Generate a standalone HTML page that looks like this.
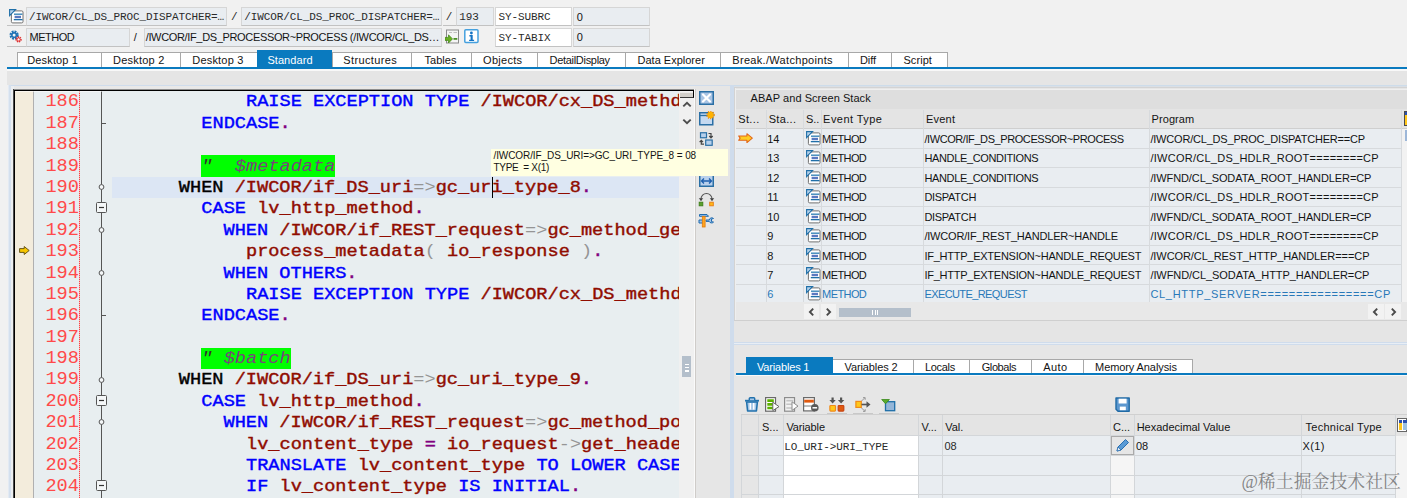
<!DOCTYPE html>
<html><head><meta charset="utf-8"><title>ABAP Debugger</title>
<style>
html,body{margin:0;padding:0}
body{width:1407px;height:498px;position:relative;overflow:hidden;background:#f1f1f1;font-family:"Liberation Sans",sans-serif;font-size:11px}
div,span,svg{position:absolute;white-space:nowrap}
.cl{font-family:"Liberation Mono",monospace;font-weight:normal;-webkit-text-stroke:0.45px;font-size:18.62px;line-height:21.39px;height:21.39px;white-space:pre;transform:scaleY(0.86);transform-origin:0 15.65px;margin-top:0.4px}
.cl span{position:static;white-space:pre}
.ln{font-family:"Liberation Mono",monospace;font-size:18.62px;line-height:21.39px;color:#ff4a4a;white-space:pre;transform:scaleY(0.95);transform-origin:0 15.65px;margin-top:0.4px}
</style></head>
<body>
<div style="left:7px;top:25px;width:20px;height:1px;background:#c2c2c2;"></div>
<div style="left:7px;top:46px;width:20px;height:1px;background:#c2c2c2;"></div>
<div style="left:443px;top:25px;width:14px;height:1px;background:#c2c2c2;"></div>
<div style="left:26px;top:7px;width:201px;height:19px;background:#e9edf1;border:1px solid #d6d6d6;border-bottom-color:#c2c2c2;box-sizing:border-box;"></div>
<div style="left:241px;top:7px;width:201px;height:19px;background:#e9edf1;border:1px solid #d6d6d6;border-bottom-color:#c2c2c2;box-sizing:border-box;"></div>
<div style="left:456px;top:7px;width:38px;height:19px;background:#e9edf1;border:1px solid #d6d6d6;border-bottom-color:#c2c2c2;box-sizing:border-box;"></div>
<div style="left:495px;top:7px;width:77px;height:19px;background:#fff;border:1px solid #d6d6d6;border-bottom-color:#c2c2c2;box-sizing:border-box;"></div>
<div style="left:573px;top:7px;width:77px;height:19px;background:#e9edf1;border:1px solid #d6d6d6;border-bottom-color:#c2c2c2;box-sizing:border-box;"></div>
<div style="left:26px;top:28px;width:104px;height:19px;background:#e9edf1;border:1px solid #d6d6d6;border-bottom-color:#c2c2c2;box-sizing:border-box;"></div>
<div style="left:144px;top:28px;width:298px;height:19px;background:#e9edf1;border:1px solid #d6d6d6;border-bottom-color:#c2c2c2;box-sizing:border-box;"></div>
<div style="left:495px;top:28px;width:77px;height:19px;background:#fff;border:1px solid #d6d6d6;border-bottom-color:#c2c2c2;box-sizing:border-box;"></div>
<div style="left:573px;top:28px;width:77px;height:19px;background:#e9edf1;border:1px solid #d6d6d6;border-bottom-color:#c2c2c2;box-sizing:border-box;"></div>
<span style="left:29.10px;top:11.57px;font-size:11px;line-height:11px;color:#2a2a2a;font-family:'Liberation Mono',monospace;letter-spacing:-0.101px;">/IWCOR/CL_DS_PROC_DISPATCHER=…</span>
<span style="left:231.00px;top:11.57px;font-size:11px;line-height:11px;color:#2a2a2a;font-family:'Liberation Mono',monospace;">/</span>
<span style="left:244.20px;top:11.57px;font-size:11px;line-height:11px;color:#2a2a2a;font-family:'Liberation Mono',monospace;letter-spacing:-0.101px;">/IWCOR/CL_DS_PROC_DISPATCHER=…</span>
<span style="left:445.70px;top:11.57px;font-size:11px;line-height:11px;color:#2a2a2a;font-family:'Liberation Mono',monospace;">/</span>
<span style="left:459.30px;top:11.57px;font-size:11px;line-height:11px;color:#2a2a2a;font-family:'Liberation Mono',monospace;letter-spacing:-0.101px;">193</span>
<span style="left:498.40px;top:11.57px;font-size:11px;line-height:11px;color:#2a2a2a;font-family:'Liberation Mono',monospace;letter-spacing:-0.101px;">SY-SUBRC</span>
<span style="left:576.70px;top:11.69px;font-size:11px;line-height:11px;color:#141414;">0</span>
<span style="left:29.60px;top:31.69px;font-size:11px;line-height:11px;color:#141414;letter-spacing:-0.494px;">METHOD</span>
<span style="left:133.80px;top:31.69px;font-size:11px;line-height:11px;color:#141414;">/</span>
<span style="left:145.70px;top:31.69px;font-size:11px;line-height:11px;color:#141414;letter-spacing:-0.344px;">/IWCOR/IF_DS_PROCESSOR~PROCESS (/IWCOR/CL_DS…</span>
<span style="left:498.40px;top:32.57px;font-size:11px;line-height:11px;color:#2a2a2a;font-family:'Liberation Mono',monospace;letter-spacing:-0.101px;">SY-TABIX</span>
<span style="left:576.70px;top:31.69px;font-size:11px;line-height:11px;color:#141414;">0</span>
<svg style="left:8.5px;top:8.7px" width="15" height="15" viewBox="0 0 15 15"><rect x="2.4" y="1.9" width="11.6" height="12" rx="1.3" fill="#fff" stroke="#707070"/><path d="M0.6 0.6H6.6L0.6 6.6Z" fill="#b4d0ea" stroke="#1f6fa8" stroke-width="1.1"/><rect x="5" y="4.5" width="8.4" height="1.4" fill="#3a86b8"/><rect x="5.6" y="6.8" width="6.4" height="2.4" fill="#5a78c0"/><rect x="4.8" y="10" width="8.7" height="1.3" fill="#1f6fa8"/></svg>
<svg style="left:8px;top:29px" width="16" height="16" viewBox="0 0 16 16"><circle cx="6.1" cy="6.1" r="3.2" fill="none" stroke="#1f72b5" stroke-width="2.8" stroke-dasharray="1.7 0.81"/><circle cx="6.1" cy="6.1" r="2.3" fill="none" stroke="#1f72b5" stroke-width="1.4"/><circle cx="10.6" cy="10.4" r="2.2" fill="none" stroke="#e03030" stroke-width="1.9" stroke-dasharray="1.1 0.63"/><circle cx="10.6" cy="10.4" r="1.5" fill="#fff" stroke="#e03030" stroke-width="0.9"/></svg>
<svg style="left:445px;top:29px" width="15" height="15" viewBox="0 0 15 15"><rect x="1.5" y="1" width="12" height="13" fill="#f4f4f4" stroke="#8a8a8a"/><path d="M4 3.500h3M8.500 3.500h3.500" stroke="#c0c0c0"/><path d="M0 8.400h3.500v-2.600l4 4.100-4 4.100v-2.600h-3.500z" fill="#6ab023" stroke="#3d8312" stroke-width="0.700"/><path d="M8.500 9.900h3.800" stroke="#3f8a1c" stroke-width="1.700"/></svg>
<svg style="left:464px;top:29px" width="15" height="15" viewBox="0 0 15 15"><rect x="0.800" y="0.800" width="13.200" height="12.600" rx="1" fill="#fff" stroke="#45a0de" stroke-width="1.500"/><circle cx="7.400" cy="4" r="1.400" fill="#1473c4"/><path d="M5.400 6.100h3.300v4.600h1.400v1.300h-5v-1.300h1.500v-3.300h-1.200z" fill="#1473c4"/></svg>
<div style="left:17px;top:52px;width:931px;height:15px;background:#fff;border-top:1px solid #a8a8a8;box-sizing:border-box;"></div>
<div style="left:17px;top:53px;width:1px;height:14px;background:#a8a8a8;"></div>
<div style="left:101px;top:53px;width:1px;height:14px;background:#a8a8a8;"></div>
<div style="left:180px;top:53px;width:1px;height:14px;background:#a8a8a8;"></div>
<div style="left:332px;top:53px;width:1px;height:14px;background:#a8a8a8;"></div>
<div style="left:411px;top:53px;width:1px;height:14px;background:#a8a8a8;"></div>
<div style="left:471px;top:53px;width:1px;height:14px;background:#a8a8a8;"></div>
<div style="left:537px;top:53px;width:1px;height:14px;background:#a8a8a8;"></div>
<div style="left:625px;top:53px;width:1px;height:14px;background:#a8a8a8;"></div>
<div style="left:720px;top:53px;width:1px;height:14px;background:#a8a8a8;"></div>
<div style="left:848px;top:53px;width:1px;height:14px;background:#a8a8a8;"></div>
<div style="left:891px;top:53px;width:1px;height:14px;background:#a8a8a8;"></div>
<div style="left:947px;top:53px;width:1px;height:14px;background:#a8a8a8;"></div>
<div style="left:7px;top:67px;width:1400px;height:2px;background:#0a7abf;"></div>
<div style="left:7px;top:69px;width:1400px;height:2px;background:#f8f8f8;"></div>
<div style="left:257px;top:50px;width:75px;height:18px;background:#0a7abf;"></div>
<span style="left:27.30px;top:54.69px;font-size:11px;line-height:11px;color:#141414;letter-spacing:0.130px;">Desktop 1</span>
<span style="left:113.00px;top:54.69px;font-size:11px;line-height:11px;color:#141414;letter-spacing:0.219px;">Desktop 2</span>
<span style="left:192.30px;top:54.69px;font-size:11px;line-height:11px;color:#141414;letter-spacing:0.186px;">Desktop 3</span>
<span style="left:267.40px;top:54.69px;font-size:11px;line-height:11px;color:#fff;letter-spacing:0.069px;">Standard</span>
<span style="left:343.30px;top:54.69px;font-size:11px;line-height:11px;color:#141414;letter-spacing:0.357px;">Structures</span>
<span style="left:424.60px;top:54.69px;font-size:11px;line-height:11px;color:#141414;letter-spacing:0.000px;">Tables</span>
<span style="left:483.10px;top:54.69px;font-size:11px;line-height:11px;color:#141414;letter-spacing:0.287px;">Objects</span>
<span style="left:549.60px;top:54.69px;font-size:11px;line-height:11px;color:#141414;letter-spacing:-0.307px;">DetailDisplay</span>
<span style="left:637.50px;top:54.69px;font-size:11px;line-height:11px;color:#141414;letter-spacing:0.004px;">Data Explorer</span>
<span style="left:732.30px;top:54.69px;font-size:11px;line-height:11px;color:#141414;letter-spacing:0.313px;">Break./Watchpoints</span>
<span style="left:859.90px;top:54.69px;font-size:11px;line-height:11px;color:#141414;letter-spacing:-0.050px;">Diff</span>
<span style="left:903.40px;top:54.69px;font-size:11px;line-height:11px;color:#141414;letter-spacing:0.080px;">Script</span>
<div style="left:7px;top:71px;width:1400px;height:14px;background:#e5e5e5;"></div>
<div style="left:8px;top:85px;width:726px;height:413px;background:#e6e6e6;"></div>
<div style="left:8px;top:85px;width:726px;height:1px;background:#cfdcec;"></div>
<div style="left:8px;top:85px;width:1px;height:413px;background:#e3eaf3;"></div>
<div style="left:9px;top:85px;width:2px;height:413px;background:#d4e0ee;"></div>
<div style="left:730px;top:85px;width:4px;height:413px;background:#cfdcec;"></div>
<div style="left:11px;top:86px;width:684px;height:4px;background:#e8e8e8;"></div>
<div style="left:11px;top:86px;width:3px;height:412px;background:#eceef0;"></div>
<div style="left:13px;top:89px;width:681px;height:1px;background:#8e8e8e;"></div>
<div style="left:13px;top:89px;width:1px;height:409px;background:#4a4a4a;"></div>
<div style="left:14px;top:90px;width:680px;height:1px;background:#000;"></div>
<div style="left:14px;top:90px;width:1px;height:408px;background:#000;"></div>
<div style="left:15px;top:91px;width:18px;height:407px;background:#f3ecdc;"></div>
<div style="left:33px;top:91px;width:69px;height:407px;background:#e8eef0;"></div>
<div style="left:33px;top:91px;width:1px;height:407px;background:#b0b0b0;"></div>
<div style="left:79px;top:91px;width:1px;height:407px;background:repeating-linear-gradient(#ff4040 0 1px,rgba(255,80,80,0.3) 1px 2px);"></div>
<div style="left:101px;top:91px;width:1px;height:407px;background:#555;"></div>
<div style="left:15px;top:91px;width:664px;height:1px;background:rgba(255,255,255,0.55);"></div>
<div style="left:102px;top:91px;width:577px;height:407px;background:#e8eef0;overflow:hidden">
<div style="left:10px;top:85.56px;width:567px;height:21.39px;background:#dce6f4"></div>
<div class="cl" style="left:144.00px;top:0.00px"><span style="color:#0000ff;">RAISE EXCEPTION TYPE </span><span style="color:#900c00;">/IWCOR/cx_DS_methd</span></div>
<div class="cl" style="left:99.30px;top:21.39px"><span style="color:#0000ff;">ENDCASE</span><span style="color:#800080;">.</span></div>
<div style="left:99.3px;top:64.17px;width:134.0px;height:21.39px;background:#00ff00"></div>
<div class="cl" style="left:99.30px;top:64.17px"><span style="color:#303030;-webkit-text-stroke:0;font-style:italic;">&quot;  </span><span style="color:#77457a;-webkit-text-stroke:0;font-style:italic;">$metadata</span></div>
<div class="cl" style="left:76.80px;top:85.56px"><span style="color:#000;">WHEN </span><span style="color:#900c00;">/IWCOR/if_DS_uri</span><span style="color:#959595;-webkit-text-stroke:0;">=&gt;</span><span style="color:#900c00;">gc_uri_type_8</span><span style="color:#800080;">.</span></div>
<div class="cl" style="left:99.30px;top:106.95px"><span style="color:#0000ff;">CASE </span><span style="color:#900c00;">lv_http_method</span><span style="color:#800080;">.</span></div>
<div class="cl" style="left:121.50px;top:128.34px"><span style="color:#0000ff;">WHEN </span><span style="color:#900c00;">/IWCOR/if_REST_request</span><span style="color:#959595;-webkit-text-stroke:0;">=&gt;</span><span style="color:#900c00;">gc_method_ge</span></div>
<div class="cl" style="left:144.00px;top:149.73px"><span style="color:#900c00;">process_metadata</span><span style="color:#959595;-webkit-text-stroke:0;">( </span><span style="color:#900c00;">io_response</span><span style="color:#959595;-webkit-text-stroke:0;"> )</span><span style="color:#800080;">.</span></div>
<div class="cl" style="left:121.50px;top:171.12px"><span style="color:#0000ff;">WHEN OTHERS</span><span style="color:#800080;">.</span></div>
<div class="cl" style="left:144.00px;top:192.51px"><span style="color:#0000ff;">RAISE EXCEPTION TYPE </span><span style="color:#900c00;">/IWCOR/cx_DS_methd</span></div>
<div class="cl" style="left:99.30px;top:213.90px"><span style="color:#0000ff;">ENDCASE</span><span style="color:#800080;">.</span></div>
<div style="left:99.3px;top:256.68px;width:89.4px;height:21.39px;background:#00ff00"></div>
<div class="cl" style="left:99.30px;top:256.68px"><span style="color:#303030;-webkit-text-stroke:0;font-style:italic;">&quot; </span><span style="color:#77457a;-webkit-text-stroke:0;font-style:italic;">$batch</span></div>
<div class="cl" style="left:76.80px;top:278.07px"><span style="color:#000;">WHEN </span><span style="color:#900c00;">/IWCOR/if_DS_uri</span><span style="color:#959595;-webkit-text-stroke:0;">=&gt;</span><span style="color:#900c00;">gc_uri_type_9</span><span style="color:#800080;">.</span></div>
<div class="cl" style="left:99.30px;top:299.46px"><span style="color:#0000ff;">CASE </span><span style="color:#900c00;">lv_http_method</span><span style="color:#800080;">.</span></div>
<div class="cl" style="left:121.50px;top:320.85px"><span style="color:#0000ff;">WHEN </span><span style="color:#900c00;">/IWCOR/if_REST_request</span><span style="color:#959595;-webkit-text-stroke:0;">=&gt;</span><span style="color:#900c00;">gc_method_po</span></div>
<div class="cl" style="left:144.00px;top:342.24px"><span style="color:#900c00;">lv_content_type </span><span style="color:#800080;">= </span><span style="color:#900c00;">io_request</span><span style="color:#959595;-webkit-text-stroke:0;">-&gt;</span><span style="color:#900c00;">get_heade</span></div>
<div class="cl" style="left:144.00px;top:363.63px"><span style="color:#0000ff;">TRANSLATE </span><span style="color:#900c00;">lv_content_type </span><span style="color:#0000ff;">TO LOWER CASE</span></div>
<div class="cl" style="left:144.00px;top:385.02px"><span style="color:#0000ff;">IF </span><span style="color:#900c00;">lv_content_type </span><span style="color:#0000ff;">IS INITIAL</span><span style="color:#800080;">.</span></div>
</div>
<div style="left:492px;top:177px;width:1px;height:21px;background:#000;"></div>
<div class="ln" style="left:45.4px;top:91.00px">186</div>
<div class="ln" style="left:45.4px;top:112.39px">187</div>
<div class="ln" style="left:45.4px;top:133.78px">188</div>
<div class="ln" style="left:45.4px;top:155.17px">189</div>
<div class="ln" style="left:45.4px;top:176.56px">190</div>
<div class="ln" style="left:45.4px;top:197.95px">191</div>
<div class="ln" style="left:45.4px;top:219.34px">192</div>
<div class="ln" style="left:45.4px;top:240.73px">193</div>
<div class="ln" style="left:45.4px;top:262.12px">194</div>
<div class="ln" style="left:45.4px;top:283.51px">195</div>
<div class="ln" style="left:45.4px;top:304.90px">196</div>
<div class="ln" style="left:45.4px;top:326.29px">197</div>
<div class="ln" style="left:45.4px;top:347.68px">198</div>
<div class="ln" style="left:45.4px;top:369.07px">199</div>
<div class="ln" style="left:45.4px;top:390.46px">200</div>
<div class="ln" style="left:45.4px;top:411.85px">201</div>
<div class="ln" style="left:45.4px;top:433.24px">202</div>
<div class="ln" style="left:45.4px;top:454.63px">203</div>
<div class="ln" style="left:45.4px;top:476.02px">204</div>
<div style="left:102px;top:123px;width:4px;height:1px;background:#555;"></div>
<div style="left:102px;top:315px;width:4px;height:1px;background:#555;"></div>
<svg style="left:97px;top:182.0px" width="10" height="10" viewBox="0 0 10 10"><circle cx="4.5" cy="5" r="2.4" fill="#f4f7f8" stroke="#555" stroke-width="1"/></svg>
<svg style="left:97px;top:224.7px" width="10" height="10" viewBox="0 0 10 10"><circle cx="4.5" cy="5" r="2.4" fill="#f4f7f8" stroke="#555" stroke-width="1"/></svg>
<svg style="left:97px;top:267.5px" width="10" height="10" viewBox="0 0 10 10"><circle cx="4.5" cy="5" r="2.4" fill="#f4f7f8" stroke="#555" stroke-width="1"/></svg>
<svg style="left:97px;top:374.5px" width="10" height="10" viewBox="0 0 10 10"><circle cx="4.5" cy="5" r="2.4" fill="#f4f7f8" stroke="#555" stroke-width="1"/></svg>
<svg style="left:97px;top:417.2px" width="10" height="10" viewBox="0 0 10 10"><circle cx="4.5" cy="5" r="2.4" fill="#f4f7f8" stroke="#555" stroke-width="1"/></svg>
<svg style="left:96px;top:202.1px" width="11" height="11" viewBox="0 0 11 11"><rect x="0.5" y="0.5" width="10" height="10" rx="1" fill="#f4f7f8" stroke="#555"/><path d="M3 5.5h5" stroke="#333" stroke-width="1.2"/></svg>
<svg style="left:96px;top:394.7px" width="11" height="11" viewBox="0 0 11 11"><rect x="0.5" y="0.5" width="10" height="10" rx="1" fill="#f4f7f8" stroke="#555"/><path d="M3 5.5h5" stroke="#333" stroke-width="1.2"/></svg>
<svg style="left:96px;top:480.2px" width="11" height="11" viewBox="0 0 11 11"><rect x="0.5" y="0.5" width="10" height="10" rx="1" fill="#f4f7f8" stroke="#555"/><path d="M3 5.5h5" stroke="#333" stroke-width="1.2"/></svg>
<svg style="left:19px;top:245.7px" width="11" height="9" viewBox="0 0 11 9"><path d="M0.6 2.6h4.6v-2.100l5 4-5 4v-2.100h-4.600z" fill="#f7c600" stroke="#5a4a10" stroke-width="0.9" stroke-linejoin="round"/></svg>
<div style="left:679px;top:91px;width:15px;height:407px;background:#f0f0f0;"></div>
<div style="left:694px;top:89px;width:1px;height:409px;background:#fafafa;"></div>
<div style="left:695px;top:89px;width:1px;height:409px;background:#cfccc9;"></div>
<div style="left:680px;top:91px;width:13px;height:6px;background:linear-gradient(#f4f4f4 0 20%,#d2cfca 40% 100%);border-right:1px solid #000;border-bottom:1px solid #3a3a3a;"></div>
<svg style="left:682px;top:101px" width="10" height="7" viewBox="0 0 10 7"><path d="M1.300 5.400L5 1.800 8.700 5.400" fill="none" stroke="#4d4d4d" stroke-width="1.900"/></svg>
<svg style="left:682px;top:118px" width="10" height="7" viewBox="0 0 10 7"><path d="M1.300 1.600L5 5.200 8.700 1.600" fill="none" stroke="#4d4d4d" stroke-width="1.900"/></svg>
<div style="left:682px;top:356px;width:9px;height:21px;background:#b4bfcb;"></div>
<div style="left:685px;top:364.0px;width:4px;height:1.2px;background:#fff;"></div>
<div style="left:685px;top:367.2px;width:4px;height:1.2px;background:#fff;"></div>
<div style="left:685px;top:370.4px;width:4px;height:1.2px;background:#fff;"></div>
<svg style="left:699px;top:91px" width="15" height="14" viewBox="0 0 15 14"><rect x="0.750" y="0.750" width="13.500" height="12.500" fill="#a9c4e4" stroke="#2a6fa5" stroke-width="1.500"/><path d="M4 3.500l7 7M11 3.500l-7 7" stroke="#fff" stroke-width="2.200" stroke-linecap="round"/></svg>
<svg style="left:699px;top:111px" width="16" height="15" viewBox="0 0 16 15"><rect x="0.750" y="1.750" width="13" height="12" fill="#c5d9f0" stroke="#2a6fa5" stroke-width="1.500"/><path d="M1 4.500h8" stroke="#2a6fa5" stroke-width="1.300"/><circle cx="11.500" cy="4" r="3.200" fill="#ffb200"/><circle cx="11.500" cy="4" r="3.700" fill="none" stroke="#f08a00" stroke-width="1.200" stroke-dasharray="1.200 1.200"/></svg>
<svg style="left:699px;top:132px" width="15" height="14" viewBox="0 0 15 14"><rect x="1.500" y="0.750" width="6" height="5" fill="#b7d0ec" stroke="#2a6fa5" stroke-width="1.200"/><rect x="6.700" y="8" width="6.500" height="5.300" fill="#b7d0ec" stroke="#2a6fa5" stroke-width="1.200"/><path d="M9.500 1.500h2.500v3.500M10.300 4l1.700 1.800 1.700-1.800" fill="none" stroke="#444" stroke-width="1.200"/><path d="M5 12.200h-2.700v-3.500M0.600 10.200l1.700-1.800 1.700 1.800" fill="none" stroke="#444" stroke-width="1.200"/></svg>
<svg style="left:699px;top:173px" width="15" height="14" viewBox="0 0 15 14"><rect x="0.750" y="0.750" width="13.500" height="12.500" fill="#b9d0ec" stroke="#2a6fa5" stroke-width="1.500"/><path d="M2.500 8h10M5 5.500l-2.500 2.500 2.500 2.500M10 5.500l2.500 2.500-2.500 2.500" fill="none" stroke="#1d5fae" stroke-width="1.300"/></svg>
<svg style="left:698px;top:192px" width="17" height="15" viewBox="0 0 17 15"><path d="M3 8.500V7a5.500 5.500 0 0 1 11 0v1.500" fill="none" stroke="#555" stroke-width="1.100"/><path d="M0.800 6.300l2.200 2.600 2.200-2.600zM11.800 6.300l2.200 2.600 2.200-2.600z" fill="#444"/><rect x="1.200" y="10.200" width="3.600" height="3.600" fill="#5aa02c" stroke="#3e7e1a" stroke-width="0.900"/><rect x="11.700" y="10.200" width="3.600" height="3.600" fill="#ffb81a" stroke="#e87a10" stroke-width="0.900"/></svg>
<svg style="left:698px;top:213px" width="17" height="15" viewBox="0 0 17 15"><path d="M1.500 1.500h7.500l1.500 1.800h-9z" fill="#9fc3e6" stroke="#1f6bb0" stroke-width="1"/><path d="M1 7h5v3h-5zM8 7h3.200a2.600 2.600 0 0 1 4.300-1.500l-2 0.500v2.600l2 0.500a2.600 2.600 0 0 1-4.300-0.700h-3.200z" fill="#9fc3e6" stroke="#1f6bb0" stroke-width="1"/><rect x="4.300" y="3.500" width="2.800" height="10.500" fill="#ffa51f" stroke="#e07b10" stroke-width="0.800"/></svg>
<div style="left:491px;top:149px;width:237px;height:27px;background:#ffffe1;"></div>
<span style="left:493.50px;top:150.53px;font-size:10px;line-height:10px;color:#141414;letter-spacing:-0.092px;">/IWCOR/IF_DS_URI=&gt;GC_URI_TYPE_8 = 08</span>
<span style="left:493.50px;top:162.53px;font-size:10px;line-height:10px;color:#141414;letter-spacing:-0.307px;white-space:pre;">TYPE  = X(1)</span>
<div style="left:734px;top:85px;width:673px;height:413px;background:#e6e6e6;"></div>
<div style="left:734px;top:85px;width:673px;height:1px;background:#cddcea;"></div>
<div style="left:734px;top:86px;width:673px;height:1px;background:#d9dfe6;"></div>
<div style="left:734px;top:87px;width:673px;height:1px;background:#d3d3d3;"></div>
<div style="left:734px;top:88px;width:673px;height:1px;background:#e6e6e6;"></div>
<div style="left:734px;top:89px;width:673px;height:1px;background:#efefef;"></div>
<div style="left:734px;top:87px;width:1px;height:234px;background:#d3d3d3;"></div>
<div style="left:735px;top:88px;width:1px;height:233px;background:#efefef;"></div>
<div style="left:736px;top:90px;width:671px;height:19px;background:#dedede;"></div>
<span style="left:750.60px;top:92.69px;font-size:11px;line-height:11px;color:#141414;letter-spacing:0.051px;">ABAP and Screen Stack</span>
<div style="left:736px;top:109px;width:671px;height:20px;background:#e4e4e4;"></div>
<div style="left:736px;top:128px;width:671px;height:1px;background:#cfcfcf;"></div>
<div style="left:736px;top:129px;width:665px;height:173px;background:#e9edf1;"></div>
<div style="left:1401px;top:129px;width:6px;height:173px;background:#f2f2f2;"></div>
<div style="left:766px;top:110px;width:1px;height:192px;background:#d7dadd;"></div>
<div style="left:803px;top:110px;width:1px;height:192px;background:#d7dadd;"></div>
<div style="left:821px;top:110px;width:1px;height:192px;background:#d7dadd;"></div>
<div style="left:923px;top:110px;width:1px;height:192px;background:#d7dadd;"></div>
<div style="left:1149px;top:110px;width:1px;height:192px;background:#d7dadd;"></div>
<div style="left:1401px;top:110px;width:1px;height:192px;background:#d7dadd;"></div>
<div style="left:736px;top:148px;width:665px;height:1px;background:#d7dadd;"></div>
<div style="left:736px;top:167px;width:665px;height:1px;background:#d7dadd;"></div>
<div style="left:736px;top:187px;width:665px;height:1px;background:#d7dadd;"></div>
<div style="left:736px;top:206px;width:665px;height:1px;background:#d7dadd;"></div>
<div style="left:736px;top:225px;width:665px;height:1px;background:#d7dadd;"></div>
<div style="left:736px;top:245px;width:665px;height:1px;background:#d7dadd;"></div>
<div style="left:736px;top:264px;width:665px;height:1px;background:#d7dadd;"></div>
<div style="left:736px;top:284px;width:665px;height:1px;background:#d7dadd;"></div>
<span style="left:738.20px;top:113.69px;font-size:11px;line-height:11px;color:#141414;letter-spacing:0.368px;">St...</span>
<span style="left:768.70px;top:113.69px;font-size:11px;line-height:11px;color:#141414;letter-spacing:0.320px;">Sta...</span>
<span style="left:806.00px;top:113.69px;font-size:11px;line-height:11px;color:#141414;letter-spacing:-0.083px;">S..</span>
<span style="left:823.10px;top:113.69px;font-size:11px;line-height:11px;color:#141414;letter-spacing:0.447px;">Event Type</span>
<span style="left:926.00px;top:113.69px;font-size:11px;line-height:11px;color:#141414;letter-spacing:0.214px;">Event</span>
<span style="left:1151.60px;top:113.69px;font-size:11px;line-height:11px;color:#141414;letter-spacing:0.060px;">Program</span>
<div style="left:736px;top:129px;width:671px;height:173px;overflow:hidden">
<span style="left:31.20px;top:4.69px;font-size:11px;line-height:11px;color:#141414;">14</span>
<svg style="left:69.5px;top:1.8px" width="15" height="15" viewBox="0 0 15 15"><rect x="2.4" y="1.9" width="11.6" height="12" rx="1.3" fill="#fff" stroke="#707070"/><path d="M0.6 0.6H6.6L0.6 6.6Z" fill="#b4d0ea" stroke="#1f6fa8" stroke-width="1.1"/><rect x="5" y="4.5" width="8.4" height="1.4" fill="#3a86b8"/><rect x="5.6" y="6.8" width="6.4" height="2.4" fill="#5a78c0"/><rect x="4.8" y="10" width="8.7" height="1.3" fill="#1f6fa8"/></svg>
<span style="left:86.10px;top:4.69px;font-size:11px;line-height:11px;color:#141414;letter-spacing:-0.594px;">METHOD</span>
<span style="left:188.40px;top:4.69px;font-size:11px;line-height:11px;color:#141414;letter-spacing:-0.416px;">/IWCOR/IF_DS_PROCESSOR~PROCESS</span>
<span style="left:414.40px;top:4.69px;font-size:11px;line-height:11px;color:#141414;letter-spacing:-0.199px;">/IWCOR/CL_DS_PROC_DISPATCHER==CP</span>
<span style="left:31.20px;top:23.69px;font-size:11px;line-height:11px;color:#141414;">13</span>
<svg style="left:69.5px;top:21.2px" width="15" height="15" viewBox="0 0 15 15"><rect x="2.4" y="1.9" width="11.6" height="12" rx="1.3" fill="#fff" stroke="#707070"/><path d="M0.6 0.6H6.6L0.6 6.6Z" fill="#b4d0ea" stroke="#1f6fa8" stroke-width="1.1"/><rect x="5" y="4.5" width="8.4" height="1.4" fill="#3a86b8"/><rect x="5.6" y="6.8" width="6.4" height="2.4" fill="#5a78c0"/><rect x="4.8" y="10" width="8.7" height="1.3" fill="#1f6fa8"/></svg>
<span style="left:86.10px;top:23.69px;font-size:11px;line-height:11px;color:#141414;letter-spacing:-0.594px;">METHOD</span>
<span style="left:188.40px;top:23.69px;font-size:11px;line-height:11px;color:#141414;letter-spacing:-0.347px;">HANDLE_CONDITIONS</span>
<span style="left:414.40px;top:23.69px;font-size:11px;line-height:11px;color:#141414;letter-spacing:0.263px;">/IWCOR/CL_DS_HDLR_ROOT========CP</span>
<span style="left:31.20px;top:43.69px;font-size:11px;line-height:11px;color:#141414;">12</span>
<svg style="left:69.5px;top:40.7px" width="15" height="15" viewBox="0 0 15 15"><rect x="2.4" y="1.9" width="11.6" height="12" rx="1.3" fill="#fff" stroke="#707070"/><path d="M0.6 0.6H6.6L0.6 6.6Z" fill="#b4d0ea" stroke="#1f6fa8" stroke-width="1.1"/><rect x="5" y="4.5" width="8.4" height="1.4" fill="#3a86b8"/><rect x="5.6" y="6.8" width="6.4" height="2.4" fill="#5a78c0"/><rect x="4.8" y="10" width="8.7" height="1.3" fill="#1f6fa8"/></svg>
<span style="left:86.10px;top:43.69px;font-size:11px;line-height:11px;color:#141414;letter-spacing:-0.594px;">METHOD</span>
<span style="left:188.40px;top:43.69px;font-size:11px;line-height:11px;color:#141414;letter-spacing:-0.347px;">HANDLE_CONDITIONS</span>
<span style="left:414.40px;top:43.69px;font-size:11px;line-height:11px;color:#141414;letter-spacing:-0.104px;">/IWFND/CL_SODATA_ROOT_HANDLER=CP</span>
<span style="left:31.20px;top:62.69px;font-size:11px;line-height:11px;color:#141414;">11</span>
<svg style="left:69.5px;top:60.1px" width="15" height="15" viewBox="0 0 15 15"><rect x="2.4" y="1.9" width="11.6" height="12" rx="1.3" fill="#fff" stroke="#707070"/><path d="M0.6 0.6H6.6L0.6 6.6Z" fill="#b4d0ea" stroke="#1f6fa8" stroke-width="1.1"/><rect x="5" y="4.5" width="8.4" height="1.4" fill="#3a86b8"/><rect x="5.6" y="6.8" width="6.4" height="2.4" fill="#5a78c0"/><rect x="4.8" y="10" width="8.7" height="1.3" fill="#1f6fa8"/></svg>
<span style="left:86.10px;top:62.69px;font-size:11px;line-height:11px;color:#141414;letter-spacing:-0.594px;">METHOD</span>
<span style="left:188.40px;top:62.69px;font-size:11px;line-height:11px;color:#141414;letter-spacing:-0.286px;">DISPATCH</span>
<span style="left:414.40px;top:62.69px;font-size:11px;line-height:11px;color:#141414;letter-spacing:0.263px;">/IWCOR/CL_DS_HDLR_ROOT========CP</span>
<span style="left:31.20px;top:82.69px;font-size:11px;line-height:11px;color:#141414;">10</span>
<svg style="left:69.5px;top:79.6px" width="15" height="15" viewBox="0 0 15 15"><rect x="2.4" y="1.9" width="11.6" height="12" rx="1.3" fill="#fff" stroke="#707070"/><path d="M0.6 0.6H6.6L0.6 6.6Z" fill="#b4d0ea" stroke="#1f6fa8" stroke-width="1.1"/><rect x="5" y="4.5" width="8.4" height="1.4" fill="#3a86b8"/><rect x="5.6" y="6.8" width="6.4" height="2.4" fill="#5a78c0"/><rect x="4.8" y="10" width="8.7" height="1.3" fill="#1f6fa8"/></svg>
<span style="left:86.10px;top:82.69px;font-size:11px;line-height:11px;color:#141414;letter-spacing:-0.594px;">METHOD</span>
<span style="left:188.40px;top:82.69px;font-size:11px;line-height:11px;color:#141414;letter-spacing:-0.286px;">DISPATCH</span>
<span style="left:414.40px;top:82.69px;font-size:11px;line-height:11px;color:#141414;letter-spacing:-0.104px;">/IWFND/CL_SODATA_ROOT_HANDLER=CP</span>
<span style="left:31.20px;top:101.69px;font-size:11px;line-height:11px;color:#141414;">9</span>
<svg style="left:69.5px;top:99.0px" width="15" height="15" viewBox="0 0 15 15"><rect x="2.4" y="1.9" width="11.6" height="12" rx="1.3" fill="#fff" stroke="#707070"/><path d="M0.6 0.6H6.6L0.6 6.6Z" fill="#b4d0ea" stroke="#1f6fa8" stroke-width="1.1"/><rect x="5" y="4.5" width="8.4" height="1.4" fill="#3a86b8"/><rect x="5.6" y="6.8" width="6.4" height="2.4" fill="#5a78c0"/><rect x="4.8" y="10" width="8.7" height="1.3" fill="#1f6fa8"/></svg>
<span style="left:86.10px;top:101.69px;font-size:11px;line-height:11px;color:#141414;letter-spacing:-0.594px;">METHOD</span>
<span style="left:188.40px;top:101.69px;font-size:11px;line-height:11px;color:#141414;letter-spacing:-0.192px;">/IWCOR/IF_REST_HANDLER~HANDLE</span>
<span style="left:414.40px;top:101.69px;font-size:11px;line-height:11px;color:#141414;letter-spacing:0.263px;">/IWCOR/CL_DS_HDLR_ROOT========CP</span>
<span style="left:31.20px;top:121.69px;font-size:11px;line-height:11px;color:#141414;">8</span>
<svg style="left:69.5px;top:118.5px" width="15" height="15" viewBox="0 0 15 15"><rect x="2.4" y="1.9" width="11.6" height="12" rx="1.3" fill="#fff" stroke="#707070"/><path d="M0.6 0.6H6.6L0.6 6.6Z" fill="#b4d0ea" stroke="#1f6fa8" stroke-width="1.1"/><rect x="5" y="4.5" width="8.4" height="1.4" fill="#3a86b8"/><rect x="5.6" y="6.8" width="6.4" height="2.4" fill="#5a78c0"/><rect x="4.8" y="10" width="8.7" height="1.3" fill="#1f6fa8"/></svg>
<span style="left:86.10px;top:121.69px;font-size:11px;line-height:11px;color:#141414;letter-spacing:-0.594px;">METHOD</span>
<span style="left:188.40px;top:121.69px;font-size:11px;line-height:11px;color:#141414;letter-spacing:-0.245px;">IF_HTTP_EXTENSION~HANDLE_REQUEST</span>
<span style="left:414.40px;top:121.69px;font-size:11px;line-height:11px;color:#141414;letter-spacing:-0.081px;">/IWCOR/CL_REST_HTTP_HANDLER===CP</span>
<span style="left:31.20px;top:140.69px;font-size:11px;line-height:11px;color:#141414;">7</span>
<svg style="left:69.5px;top:138.0px" width="15" height="15" viewBox="0 0 15 15"><rect x="2.4" y="1.9" width="11.6" height="12" rx="1.3" fill="#fff" stroke="#707070"/><path d="M0.6 0.6H6.6L0.6 6.6Z" fill="#b4d0ea" stroke="#1f6fa8" stroke-width="1.1"/><rect x="5" y="4.5" width="8.4" height="1.4" fill="#3a86b8"/><rect x="5.6" y="6.8" width="6.4" height="2.4" fill="#5a78c0"/><rect x="4.8" y="10" width="8.7" height="1.3" fill="#1f6fa8"/></svg>
<span style="left:86.10px;top:140.69px;font-size:11px;line-height:11px;color:#141414;letter-spacing:-0.594px;">METHOD</span>
<span style="left:188.40px;top:140.69px;font-size:11px;line-height:11px;color:#141414;letter-spacing:-0.245px;">IF_HTTP_EXTENSION~HANDLE_REQUEST</span>
<span style="left:414.40px;top:140.69px;font-size:11px;line-height:11px;color:#141414;letter-spacing:-0.068px;">/IWFND/CL_SODATA_HTTP_HANDLER=CP</span>
<span style="left:31.20px;top:159.69px;font-size:11px;line-height:11px;color:#2878b8;">6</span>
<svg style="left:69.5px;top:157.4px" width="15" height="15" viewBox="0 0 15 15"><rect x="2.4" y="1.9" width="11.6" height="12" rx="1.3" fill="#fff" stroke="#707070"/><path d="M0.6 0.6H6.6L0.6 6.6Z" fill="#b4d0ea" stroke="#1f6fa8" stroke-width="1.1"/><rect x="5" y="4.5" width="8.4" height="1.4" fill="#3a86b8"/><rect x="5.6" y="6.8" width="6.4" height="2.4" fill="#5a78c0"/><rect x="4.8" y="10" width="8.7" height="1.3" fill="#1f6fa8"/></svg>
<span style="left:86.10px;top:159.69px;font-size:11px;line-height:11px;color:#2878b8;letter-spacing:-0.594px;">METHOD</span>
<span style="left:188.40px;top:159.69px;font-size:11px;line-height:11px;color:#2878b8;letter-spacing:-0.590px;">EXECUTE_REQUEST</span>
<span style="left:414.40px;top:159.69px;font-size:11px;line-height:11px;color:#2878b8;letter-spacing:0.703px;">CL_HTTP_SERVER================CP</span>
</div>
<svg style="left:737.6px;top:132.6px" width="15" height="10.3" viewBox="0 0 16 11"><path d="M0.700 3.200h8.800v-2.500l5.800 4.800-5.800 4.800v-2.500h-8.800l1.600-2.300z" fill="#ffcc22" stroke="#e2651a" stroke-width="1.100" stroke-linejoin="round"/></svg>
<div style="left:1404px;top:111px;width:3px;height:15px;background:#4a4a4a;"></div>
<div style="left:1405px;top:112px;width:2px;height:13px;background:#ffc61a;"></div>
<div style="left:1405px;top:112px;width:2px;height:3px;background:#2a50b0;"></div>
<div style="left:1405px;top:130px;width:2px;height:11px;background:#9db7d8;"></div>
<div style="left:736px;top:302px;width:671px;height:18px;background:#e8e8e8;"></div>
<div style="left:804px;top:304px;width:15px;height:15px;background:#f2f2f2;"></div>
<div style="left:821px;top:304px;width:15px;height:15px;background:#f2f2f2;"></div>
<div style="left:1368px;top:304px;width:16px;height:15px;background:#f2f2f2;"></div>
<div style="left:1385px;top:304px;width:16px;height:15px;background:#f2f2f2;"></div>
<svg style="left:808px;top:307px" width="7" height="10" viewBox="0 0 7 10"><path d="M5.200 1.600L1.900 5l3.300 3.400" fill="none" stroke="#4a4a4a" stroke-width="1.900"/></svg>
<svg style="left:825px;top:307px" width="7" height="10" viewBox="0 0 7 10"><path d="M1.800 1.600L5.100 5l-3.300 3.400" fill="none" stroke="#4a4a4a" stroke-width="1.900"/></svg>
<div style="left:839px;top:307.5px;width:72px;height:9px;background:#b4bfcb;"></div>
<div style="left:872.0px;top:309.5px;width:1px;height:5px;background:#fff;"></div>
<div style="left:874.5px;top:309.5px;width:1px;height:5px;background:#fff;"></div>
<div style="left:877.0px;top:309.5px;width:1px;height:5px;background:#fff;"></div>
<svg style="left:1372px;top:307px" width="7" height="10" viewBox="0 0 7 10"><path d="M5.200 1.600L1.900 5l3.300 3.400" fill="none" stroke="#4a4a4a" stroke-width="1.900"/></svg>
<svg style="left:1390px;top:307px" width="7" height="10" viewBox="0 0 7 10"><path d="M1.800 1.600L5.100 5l-3.300 3.400" fill="none" stroke="#4a4a4a" stroke-width="1.900"/></svg>
<div style="left:734px;top:320px;width:673px;height:1px;background:#cfcfcf;"></div>
<div style="left:734px;top:321px;width:673px;height:21px;background:#e5e5e5;"></div>
<div style="left:734px;top:342px;width:673px;height:1px;background:#cfdcec;"></div>
<div style="left:734px;top:343px;width:673px;height:1px;background:#e8eef5;"></div>
<div style="left:734px;top:344px;width:673px;height:1px;background:#cfdcec;"></div>
<div style="left:833px;top:359px;width:360px;height:14px;background:#fff;border-top:1px solid #a8a8a8;box-sizing:border-box;"></div>
<div style="left:913px;top:360px;width:1px;height:13px;background:#a8a8a8;"></div>
<div style="left:969px;top:360px;width:1px;height:13px;background:#a8a8a8;"></div>
<div style="left:1031px;top:360px;width:1px;height:13px;background:#a8a8a8;"></div>
<div style="left:1083px;top:360px;width:1px;height:13px;background:#a8a8a8;"></div>
<div style="left:1192px;top:360px;width:1px;height:13px;background:#a8a8a8;"></div>
<div style="left:736px;top:373px;width:671px;height:2px;background:#0a7abf;"></div>
<div style="left:736px;top:375px;width:671px;height:1px;background:#f8f8f8;"></div>
<div style="left:746px;top:357px;width:87px;height:18px;background:#0a7abf;"></div>
<span style="left:757.00px;top:361.69px;font-size:11px;line-height:11px;color:#fff;letter-spacing:-0.174px;">Variables 1</span>
<span style="left:844.60px;top:361.69px;font-size:11px;line-height:11px;color:#141414;letter-spacing:-0.120px;">Variables 2</span>
<span style="left:925.00px;top:361.69px;font-size:11px;line-height:11px;color:#141414;letter-spacing:-0.333px;">Locals</span>
<span style="left:981.70px;top:361.69px;font-size:11px;line-height:11px;color:#141414;letter-spacing:-0.400px;">Globals</span>
<span style="left:1043.30px;top:361.69px;font-size:11px;line-height:11px;color:#141414;letter-spacing:0.368px;">Auto</span>
<span style="left:1095.10px;top:361.69px;font-size:11px;line-height:11px;color:#141414;letter-spacing:-0.096px;">Memory Analysis</span>
<svg style="left:743.5px;top:397px" width="16" height="15" viewBox="0 0 16 15"><path d="M1 3.700h14" stroke="#2272ad" stroke-width="1.800"/><path d="M5.300 3.200V1.500a0.800 0.800 0 0 1 0.800-0.800h3.800a0.800 0.800 0 0 1 0.800 0.800v1.700" fill="#a8c8e8" stroke="#2272ad" stroke-width="1.400"/><path d="M2.600 5l1 9h8.800l1-9z" fill="#a8c8e8" stroke="#2272ad" stroke-width="1.600" stroke-linejoin="round"/><path d="M6.300 6v6.500M9.700 6v6.500" stroke="#fff" stroke-width="1.500"/></svg>
<svg style="left:764.5px;top:397px" width="15" height="15" viewBox="0 0 15 15"><rect x="0.600" y="0.600" width="9.900" height="13.600" fill="#fff" stroke="#6a6a6a" stroke-width="1.200"/><path d="M2.300 3.600h6.500M2.300 7.300h6.500M2.300 11h6.500" stroke="#5cb000" stroke-width="2.700"/><path d="M7.800 5.200v8.400l6.200-4z" fill="#fff" stroke="#6a6a6a" stroke-width="1"/></svg>
<svg style="left:783.7px;top:397px" width="15" height="15" viewBox="0 0 15 15"><rect x="0.600" y="0.600" width="9.900" height="13.600" fill="#f2f2f2" stroke="#8c8c8c" stroke-width="1.200"/><path d="M2.300 3.600h7M2.300 7.300h7M2.300 11h7" stroke="#c4c4c4" stroke-width="1.600"/><path d="M8 4.800v8.600l6-4.300z" fill="#fff" stroke="#8c8c8c" stroke-width="1"/></svg>
<svg style="left:802.5px;top:397px" width="17" height="15" viewBox="0 0 17 15"><rect x="0.600" y="0.600" width="10.800" height="13.300" fill="#fff" stroke="#6a6a6a" stroke-width="1.200"/><rect x="1.200" y="2.700" width="9.600" height="2.900" fill="#e05a10"/><path d="M1 9h10" stroke="#7a7a7a" stroke-width="1"/><circle cx="11.800" cy="10.800" r="3.800" fill="#585858"/><path d="M9.500 10.800h4.600" stroke="#fff" stroke-width="1.500"/></svg>
<svg style="left:828.5px;top:397px" width="16" height="15" viewBox="0 0 16 15"><path d="M3.600 0.500v3M12.100 0.500v3" stroke="#555" stroke-width="2.200"/><path d="M0.400 3l3.200 3.500 3.200-3.500zM8.900 3l3.200 3.500 3.200-3.500z" fill="#555"/><rect x="0.900" y="8.500" width="5.600" height="5.600" rx="0.800" fill="#ffc81a" stroke="#f08a1a" stroke-width="1.200"/><rect x="9.200" y="8.500" width="5.600" height="5.600" rx="0.800" fill="#e05a10" stroke="#c84410" stroke-width="1.200"/></svg>
<svg style="left:854.5px;top:397px" width="17" height="15" viewBox="0 0 17 15"><path d="M6 4.500l4-3.800M8 0.600h2.200v2.200M6 10.500l4 3.800M8 14.400h2.200v-2.200" fill="none" stroke="#9a9a9a" stroke-width="1"/><rect x="0.900" y="4.400" width="5.400" height="6" fill="#ffc81a" stroke="#f08a1a" stroke-width="1.200"/><path d="M6.500 7.500h6" stroke="#555" stroke-width="1.600"/><path d="M11.500 4.300l4 3.200-4 3.200z" fill="#555"/></svg>
<svg style="left:881px;top:397px" width="15" height="15" viewBox="0 0 15 15"><rect x="4.500" y="4.700" width="9.200" height="9" fill="#94b6d8" stroke="#1f6fa8" stroke-width="1.300"/><path d="M0.700 2.500h7.700l-3.850 4.300z" fill="#5aaa2c" stroke="#3a8a1a" stroke-width="0.800"/></svg>
<div style="left:827px;top:413px;width:20px;height:2px;background:#c8c8c8;"></div>
<div style="left:853px;top:413px;width:20px;height:2px;background:#c8c8c8;"></div>
<div style="left:879px;top:413px;width:20px;height:2px;background:#c8c8c8;"></div>
<svg style="left:1114.5px;top:397px" width="15" height="15" viewBox="0 0 15 15"><path d="M1 1h13.200v13.200h-11.200l-2-2z" fill="#5b97cf" stroke="#1f6aa5" stroke-width="1.400" stroke-linejoin="round"/><rect x="3.600" y="1.700" width="8" height="4.800" fill="#fff"/><rect x="4.800" y="9.600" width="6" height="3.600" fill="#fff"/></svg>
<div style="left:741px;top:414px;width:666px;height:1px;background:#d0d0d0;"></div>
<div style="left:741px;top:415px;width:666px;height:21px;background:#e4e4e4;"></div>
<div style="left:741px;top:436px;width:655px;height:62px;background:#e9edf1;"></div>
<div style="left:1396px;top:436px;width:11px;height:62px;background:#f4f4f4;"></div>
<div style="left:784px;top:436px;width:134px;height:62px;background:#fff;"></div>
<div style="left:741px;top:436px;width:17px;height:62px;background:#e6e6e6;"></div>
<div style="left:1111px;top:456px;width:23px;height:42px;background:#f5f5f5;"></div>
<div style="left:741px;top:415px;width:1px;height:83px;background:#d3d6d9;"></div>
<div style="left:758px;top:415px;width:1px;height:83px;background:#d3d6d9;"></div>
<div style="left:783px;top:415px;width:1px;height:83px;background:#d3d6d9;"></div>
<div style="left:918px;top:415px;width:1px;height:83px;background:#d3d6d9;"></div>
<div style="left:942px;top:415px;width:1px;height:83px;background:#d3d6d9;"></div>
<div style="left:1110px;top:415px;width:1px;height:83px;background:#d3d6d9;"></div>
<div style="left:1134px;top:415px;width:1px;height:83px;background:#d3d6d9;"></div>
<div style="left:1301px;top:415px;width:1px;height:83px;background:#d3d6d9;"></div>
<div style="left:1395px;top:415px;width:1px;height:83px;background:#d3d6d9;"></div>
<div style="left:742px;top:435px;width:654px;height:1px;background:#d3d6d9;"></div>
<div style="left:742px;top:455px;width:654px;height:1px;background:#d3d6d9;"></div>
<div style="left:742px;top:475px;width:654px;height:1px;background:#d3d6d9;"></div>
<div style="left:742px;top:494px;width:654px;height:1px;background:#d3d6d9;"></div>
<span style="left:762.00px;top:421.69px;font-size:11px;line-height:11px;color:#141414;">S...</span>
<span style="left:786.40px;top:421.69px;font-size:11px;line-height:11px;color:#141414;letter-spacing:-0.130px;">Variable</span>
<span style="left:921.40px;top:421.69px;font-size:11px;line-height:11px;color:#141414;">V...</span>
<span style="left:945.20px;top:421.69px;font-size:11px;line-height:11px;color:#141414;">Val.</span>
<span style="left:1113.00px;top:421.69px;font-size:11px;line-height:11px;color:#141414;">C...</span>
<span style="left:1136.70px;top:421.69px;font-size:11px;line-height:11px;color:#141414;letter-spacing:-0.021px;">Hexadecimal Value</span>
<span style="left:1305.50px;top:421.69px;font-size:11px;line-height:11px;color:#141414;letter-spacing:0.281px;">Technical Type</span>
<span style="left:784.20px;top:441.57px;font-size:11px;line-height:11px;color:#2a2a2a;font-family:'Liberation Mono',monospace;letter-spacing:-0.101px;">LO_URI-&gt;URI_TYPE</span>
<span style="left:944.40px;top:440.69px;font-size:11px;line-height:11px;color:#2a2a2a;letter-spacing:0.082px;">08</span>
<span style="left:1136.00px;top:440.69px;font-size:11px;line-height:11px;color:#141414;">08</span>
<span style="left:1302.50px;top:440.69px;font-size:11px;line-height:11px;color:#141414;letter-spacing:0.355px;">X(1)</span>
<div style="left:1111px;top:436px;width:23px;height:19px;background:#e6e6e6;border:1px solid #aaa;box-sizing:border-box;"></div>
<svg style="left:1115px;top:438px" width="15" height="15" viewBox="0 0 15 15"><path d="M2 13l1-4 7.500-7.500 3 3-7.500 7.500z" fill="#5b9bd5" stroke="#2a6fb0" stroke-width="1"/><path d="M2 13l1-4 3 3z" fill="#e8eef5" stroke="#2a6fb0" stroke-width="0.800"/></svg>
<div style="left:1397px;top:418px;width:10px;height:14px;background:#fff;border:1px solid #666;box-sizing:border-box;"></div>
<div style="left:1399px;top:420px;width:3px;height:10px;background:#ffc61a;"></div>
<div style="left:1399px;top:420px;width:3px;height:3px;background:#2a50b0;"></div>
<div style="left:1403px;top:420px;width:4px;height:10px;background:#9cc0e0;"></div>
<div style="left:1403px;top:420px;width:4px;height:3px;background:#2a50b0;"></div>
<span style="left:1241.4px;top:470.6px;font-size:17.9px;line-height:22px;color:rgba(105,105,105,0.8);font-family:'Liberation Serif','Noto Serif CJK SC',serif;white-space:nowrap">@稀土掘金技术社区</span>
</body></html>
